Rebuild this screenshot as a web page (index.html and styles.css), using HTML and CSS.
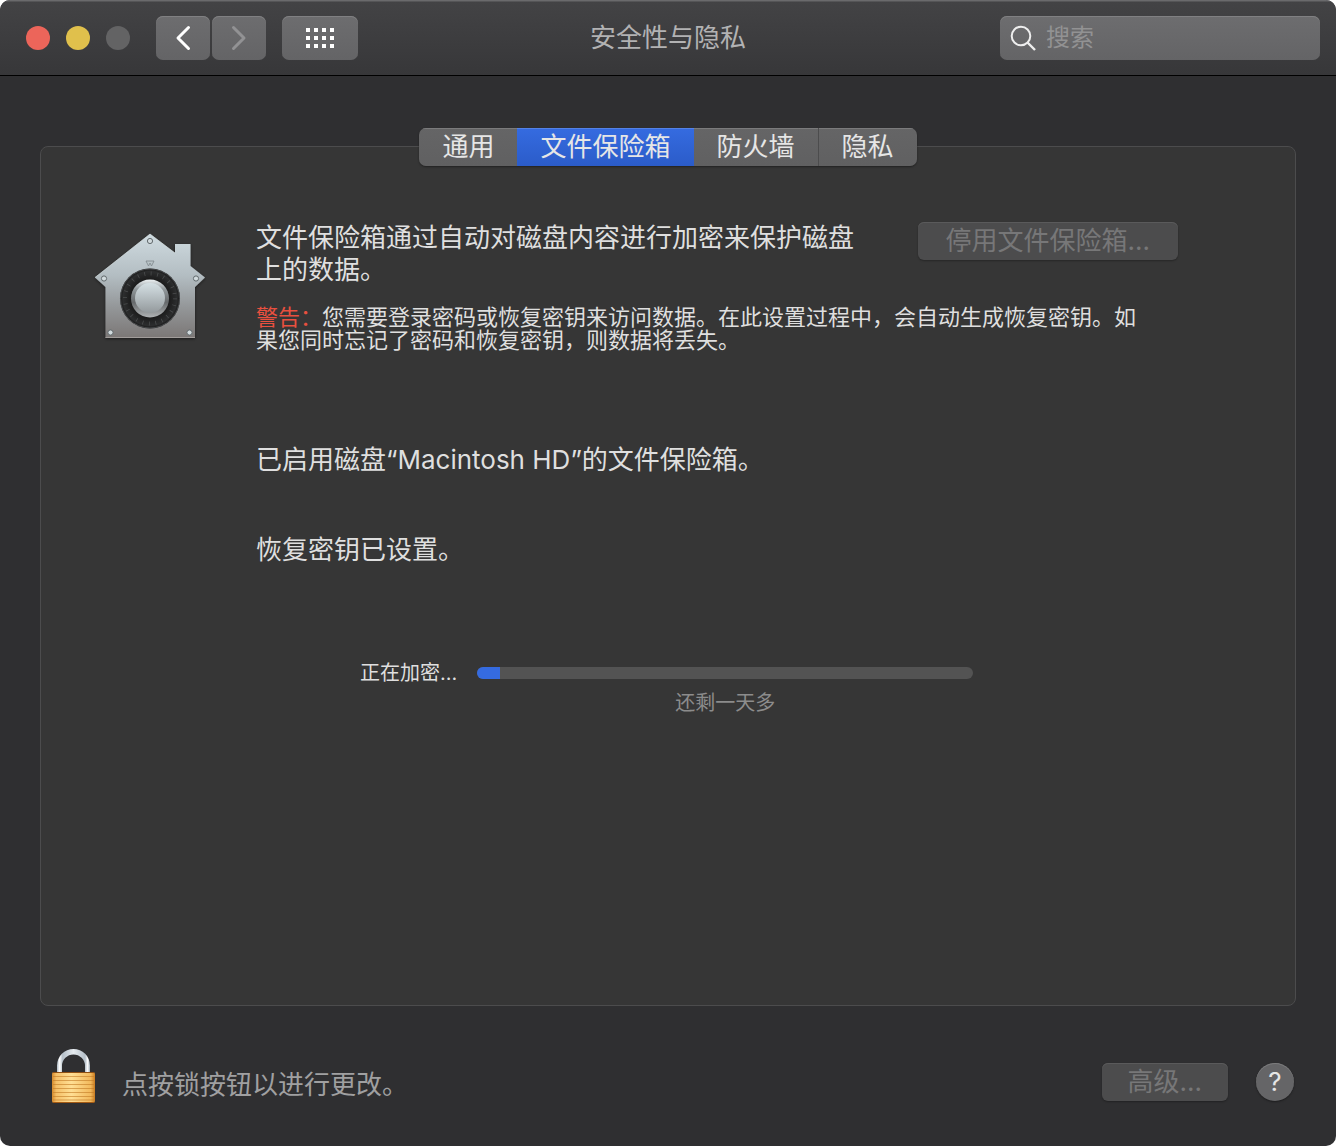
FILE: index.html
```html
<!DOCTYPE html>
<html lang="zh-CN">
<head>
  <meta charset="UTF-8">
  <title>安全性与隐私</title>
  <meta name="viewport" content="width=device-width, initial-scale=1.0">
  <link rel="stylesheet" href="styles.css">
</head>
<body>

  <div class="window">
    <header class="titlebar">
      <div class="toolbar">
        <div class="lights">
          <button class="light close" aria-label="关闭"></button>
          <button class="light minimize" aria-label="最小化"></button>
          <button class="light zoom" aria-label="缩放" disabled></button>
        </div>
        <div class="nav">
          <button class="tool" aria-label="后退">
            <svg width="16" height="26" viewBox="0 0 16 26"><path d="M13.500 2.500L3 13l10.500 10.500" fill="none" stroke="#fff" stroke-width="3" stroke-linecap="round" stroke-linejoin="round"/></svg>
          </button>
          <button class="tool" aria-label="前进" disabled>
            <svg width="16" height="26" viewBox="0 0 16 26"><path d="M2.500 2.500L13 13L2.500 23.500" fill="none" stroke="#929294" stroke-width="3" stroke-linecap="round" stroke-linejoin="round"/></svg>
          </button>
        </div>
        <button class="tool grid" aria-label="显示全部">
          <svg width="28" height="20" viewBox="0 0 28 20" fill="#fff">
            <path d="M0 0h4v4H0zM8 0h4v4H8zM16 0h4v4h-4zM24 0h4v4h-4zM0 8h4v4H0zM8 8h4v4H8zM16 8h4v4h-4zM24 8h4v4h-4zM0 16h4v4H0zM8 16h4v4H8zM16 16h4v4h-4zM24 16h4v4h-4z"/>
          </svg>
        </button>
      </div>
      <h1>安全性与隐私</h1>
      <label class="search">
        <svg width="26" height="26" viewBox="0 0 26 26" fill="none" stroke="#eee" stroke-width="2"><circle cx="11" cy="11" r="9.300"/><path d="M17.500 17.500l7.500 7.500" stroke-width="2.400"/></svg>
        <input type="search" placeholder="搜索" aria-label="搜索">
      </label>
    </header>

    <main>
      <div class="tabs" role="tablist">
        <button role="tab">通用</button>
        <button role="tab" class="active" aria-selected="true">文件保险箱</button>
        <button role="tab">防火墙</button>
        <button role="tab" class="divided">隐私</button>
      </div>

      <section class="panel">
        <svg class="vault" width="116" height="120" viewBox="0 0 116 120">
          <defs>
            <linearGradient id="house" x1="0" y1="0" x2="0" y2="1">
              <stop offset="0" stop-color="#cfdbe0"/>
              <stop offset="0.400" stop-color="#b3bdc2"/>
              <stop offset="0.700" stop-color="#949799"/>
              <stop offset="1" stop-color="#7b7776"/>
            </linearGradient>
            <linearGradient id="rim" x1="0" y1="0" x2="0" y2="1">
              <stop offset="0" stop-color="#eef3f5"/>
              <stop offset="0.250" stop-color="#92999c"/>
              <stop offset="0.600" stop-color="#66696b"/>
              <stop offset="1" stop-color="#b0b3b5"/>
            </linearGradient>
            <linearGradient id="knob" x1="0" y1="0" x2="0" y2="1">
              <stop offset="0" stop-color="#d5e0e4"/>
              <stop offset="1" stop-color="#93999c"/>
            </linearGradient>
            <radialGradient id="dial">
              <stop offset="0.600" stop-color="#191919"/>
              <stop offset="0.900" stop-color="#2c2d2e"/>
              <stop offset="1" stop-color="#141414"/>
            </radialGradient>
            <filter id="shade" x="-10%" y="-10%" width="120%" height="120%">
              <feDropShadow dx="0" dy="1" stdDeviation="1.500" flood-color="#000" flood-opacity="0.500"/>
            </filter>
          </defs>
          <path d="M58 4L83 23V14h15.500v22L113 47.500L103 57v51H13.500V57L3 47.500z" fill="url(#house)" filter="url(#shade)"/>
          <path d="M3 47.500L58 4L83 23" fill="none" stroke="#e3ecef" stroke-opacity="0.600"/>
          <path d="M13.500 107.500H103" stroke="#a19d9b"/>
          <path d="M54 31h8l-2.500 5-1.500-3-1.500 3z" fill="#b8c3c7" stroke="#7d878b" stroke-width="0.800"/>
          <circle cx="58" cy="68.500" r="30" fill="url(#dial)"/>
          <circle cx="58" cy="68.500" r="25" fill="none" stroke="#4b4d4e" stroke-width="4" stroke-dasharray="0.800 5.745"/>
          <circle cx="58" cy="68.500" r="29.500" fill="none" stroke="#5b5f61" stroke-width="0.700"/>
          <circle cx="58" cy="68.500" r="19" fill="url(#rim)"/>
          <circle cx="58" cy="68" r="15" fill="url(#knob)"/>
          <g fill="#d1dadd" stroke="#626a6d">
            <circle cx="58" cy="11" r="2.600"/>
            <circle cx="12" cy="48.500" r="2.600"/>
            <circle cx="104" cy="48.500" r="2.600"/>
            <circle cx="18.500" cy="102.500" r="2.600"/>
            <circle cx="97.500" cy="102.500" r="2.600"/>
          </g>
        </svg>

        <div class="content">
          <div class="intro">
            <p>文件保险箱通过自动对磁盘内容进行加密来保护磁盘上的数据。</p>
            <button class="push turn-off" disabled>停用文件保险箱...</button>
          </div>
          <p class="warning"><span>警告：</span>您需要登录密码或恢复密钥来访问数据。在此设置过程中，会自动生成恢复密钥。如果您同时忘记了密码和恢复密钥，则数据将丢失。</p>
          <p class="enabled">已启用磁盘“Macintosh HD”的文件保险箱。</p>
          <p class="recovery">恢复密钥已设置。</p>
          <div class="encrypting">
            <label for="encryption">正在加密...</label>
            <progress id="encryption" value="23" max="496"></progress>
            <span class="remaining">还剩一天多</span>
          </div>
        </div>
      </section>
    </main>

    <footer>
      <button class="lock" aria-label="锁定">
        <svg width="44" height="56" viewBox="0 0 44 56">
          <defs>
            <linearGradient id="brass" x1="0" y1="0" x2="1" y2="0">
              <stop offset="0" stop-color="#d58a2c"/>
              <stop offset="0.100" stop-color="#f5c068"/>
              <stop offset="0.450" stop-color="#ffdf94"/>
              <stop offset="0.900" stop-color="#f2b95c"/>
              <stop offset="1" stop-color="#c97b20"/>
            </linearGradient>
            <linearGradient id="steel" x1="0" y1="0" x2="1" y2="0">
              <stop offset="0" stop-color="#aebbc5"/>
              <stop offset="0.080" stop-color="#ffffff"/>
              <stop offset="0.170" stop-color="#b4bfc8"/>
              <stop offset="0.500" stop-color="#e6ebef"/>
              <stop offset="0.850" stop-color="#b4bfc8"/>
              <stop offset="0.930" stop-color="#ffffff"/>
              <stop offset="1" stop-color="#9dabb5"/>
            </linearGradient>
          </defs>
          <path d="M5 24V16.500a16.500 16.500 0 0 1 33 0V24h-5V17a11.500 11.500 0 0 0-23 0V24z" fill="url(#steel)"/>
          <rect y="23" width="43" height="31" rx="2" fill="url(#brass)"/>
          <path d="M1 27.500h41M1 31.500h41M1 35.500h41M1 39.500h41M1 43.500h41M1 47.500h41M1 51h41" stroke="#c27a24" stroke-opacity="0.600" stroke-width="1.200"/>
          <path d="M1 23.500h41" stroke="#8f4f12"/>
          <path d="M1 53.500h41" stroke="#a45a14"/>
        </svg>
      </button>
      <p>点按锁按钮以进行更改。</p>
      <button class="push" disabled>高级...</button>
      <button class="help" aria-label="帮助">?</button>
    </footer>
  </div>

</body>
</html>
```

FILE: styles.css
```css
* {
  box-sizing: border-box;
}
body {
  margin: 0;
  background-color: #fff;
  font-family: Inter, "Noto Sans CJK SC", sans-serif;
  font-size: 26px;
  line-height: 32px;
  color: #dfdfdf;
}
h1, p {
  margin: 0;
  font-weight: normal;
}
button {
  border: none;
  padding: 0;
  font: inherit;
  color: inherit;
}
svg {
  display: block;
}
.window {
  display: flex;
  flex-direction: column;
  min-height: 100vh;
  background-color: #2f2f31;
  border-radius: 10px;
  overflow: hidden;
}

/* title bar */
.titlebar {
  display: grid;
  grid-template-columns: 1fr auto 1fr;
  align-items: center;
  height: 76px;
  padding: 0 16px;
  background: linear-gradient(#434345, #373739);
  border-top: 1px solid #6a6a6c;
  border-bottom: 1px solid #000;
  box-shadow: inset 0 1px #555557;
}
.titlebar h1 {
  font-size: 26px;
  color: #b2b2b3;
}
.toolbar {
  display: flex;
  align-items: center;
}
.lights {
  display: flex;
  gap: 16px;
  margin: 0 26px 0 10px;
}
.light {
  width: 24px;
  height: 24px;
  border-radius: 50%;
}
.close {
  background-color: #ec655a;
}
.minimize {
  background-color: #e0c04c;
}
.zoom {
  background-color: #636364;
}
.nav {
  display: flex;
  gap: 2px;
  margin-right: 16px;
}
.tool {
  display: flex;
  align-items: center;
  justify-content: center;
  width: 54px;
  height: 44px;
  border-radius: 7px;
  background: linear-gradient(#6d6d6f, #646466);
  box-shadow: inset 0 1px #808082;
}
.grid {
  width: 76px;
}
.search {
  justify-self: end;
  display: flex;
  align-items: center;
  gap: 10px;
  width: 320px;
  height: 44px;
  padding: 0 10px;
  border-radius: 7px;
  background: linear-gradient(#6d6d6f, #646466);
  box-shadow: inset 0 1px #808082;
}
.search input {
  flex: 1;
  min-width: 0;
  border: none;
  padding: 0;
  outline: none;
  background: none;
  font: inherit;
  font-size: 24px;
  color: #fff;
}
.search input::placeholder {
  color: #929293;
}

/* tabs and panel */
main {
  flex: 1;
  display: flex;
  flex-direction: column;
  align-items: center;
  padding: 52px 40px 0;
}
.tabs {
  position: relative;
  display: flex;
  border-radius: 7px;
  overflow: hidden;
  background: linear-gradient(#656566, #606061);
  box-shadow: 0 1px 2px rgba(0,0,0,0.4);
}
.tabs button {
  height: 38px;
  padding: 0 23px;
  background: none;
  box-shadow: inset 0 1px #7b7b7c;
  color: #e6e6e6;
}
.tabs .active {
  background: linear-gradient(#356be0, #2b5cc9);
  box-shadow: inset 0 1px #5482e6;
}
.tabs .divided {
  border-left: 1px solid #4c4c4d;
}
.panel {
  flex: 1;
  align-self: stretch;
  display: flex;
  align-items: flex-start;
  gap: 48px;
  margin-top: -20px;
  padding: 75px 117px 40px 51px;
  background-color: #363636;
  border: 1px solid #4c4c4d;
  border-radius: 8px;
}
.vault {
  flex: none;
  margin-top: 8px;
}
.content {
  flex: 1;
}
.intro {
  display: flex;
  align-items: flex-start;
  justify-content: space-between;
  gap: 44px;
}
.push {
  flex: none;
  height: 38px;
  padding: 0 26px;
  border-radius: 6px;
  background-color: #4c4c4d;
  box-shadow: inset 0 1px #5a5a5b, 0 1px 2px rgba(0,0,0,0.3);
  color: #777778;
}
.turn-off {
  padding: 0 28px;
}
.warning {
  margin-top: 20px;
  padding-right: 24px;
  font-size: 22px;
  line-height: 23px;
}
.warning span {
  display: inline-block;
  color: #e9503f;
}
.enabled {
  margin-top: 92px;
}
.recovery {
  margin-top: 58px;
}
.encrypting {
  display: grid;
  grid-template-columns: auto 1fr;
  align-items: center;
  gap: 6px 20px;
  margin-top: 95px;
  padding: 0 205px 0 104px;
  font-size: 20px;
  line-height: 24px;
}
progress {
  appearance: none;
  width: 100%;
  height: 12px;
  border: none;
  border-radius: 6px;
  overflow: hidden;
  background-color: #535353;
}
progress::-webkit-progress-bar {
  background-color: #535353;
}
progress::-webkit-progress-value {
  background-color: #356be0;
}
.remaining {
  grid-column: 2;
  text-align: center;
  color: #8c8c8c;
}

/* bottom bar */
footer {
  display: flex;
  align-items: center;
  padding: 43px 42px 31px 52px;
  height: 140px;
}
footer p {
  flex: 1;
  padding-top: 6px;
  color: #a0a0a1;
}
.lock {
  align-self: flex-start;
  margin-right: 26px;
  background: none;
}
.help {
  width: 38px;
  height: 38px;
  margin-left: 28px;
  border-radius: 50%;
  background-color: #656567;
  box-shadow: inset 0 1px #7b7b7c, 0 1px 2px rgba(0,0,0,0.4);
  color: #e6e6e6;
}
```
